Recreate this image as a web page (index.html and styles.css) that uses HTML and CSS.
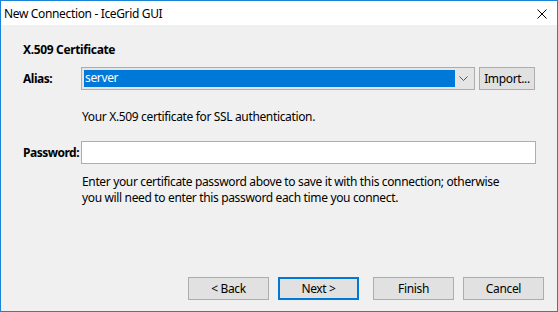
FILE: index.html
```html
<!DOCTYPE html>
<html lang="en">
<head>
  <meta charset="UTF-8">
  <title>New Connection - IceGrid GUI</title>
  <link rel="stylesheet" href="styles.css">
</head>
<body>
  <div class="window">
    <div class="titlebar">
      <span class="title">New Connection - IceGrid GUI</span>
      <span class="close">
        <svg width="10" height="10" viewBox="0 0 10 10"><path d="M0.5 0.5 L9.5 9.5 M9.5 0.5 L0.5 9.5" stroke="#000" stroke-width="1" fill="none"/></svg>
      </span>
    </div>
    <div class="content">
      <h1 class="heading">X.509 Certificate</h1>
      <div class="row alias-row">
        <label class="label">Alias:</label>
        <div class="combo">
          <span class="combo-value">server</span>
          <span class="combo-arrow">
            <svg width="9" height="5" viewBox="0 0 9 5"><path d="M0.5 0.5 L4.5 4.5 L8.5 0.5" stroke="#555" stroke-width="1" fill="none"/></svg>
          </span>
        </div>
        <button class="btn import">Import...</button>
      </div>
      <p class="hint">Your X.509 certificate for SSL authentication.</p>
      <div class="row pass-row">
        <label class="label">Password:</label>
        <div class="input"></div>
      </div>
      <p class="help">Enter your certificate password above to save it with this connection; otherwise<br>you will need to enter this password each time you connect.</p>
      <div class="footer">
        <button class="btn">&lt; Back</button>
        <button class="btn default">Next &gt;</button>
        <button class="btn finish">Finish</button>
        <button class="btn">Cancel</button>
      </div>
    </div>
  </div>
</body>
</html>
```

FILE: styles.css
```css
* { box-sizing: border-box; }
body {
  margin: 0;
  font-family: 'Noto Sans', 'Open Sans', sans-serif;
  font-size: 12px;
  letter-spacing: -0.35px;
  color: #000;
}
.window {
  width: 558px;
  height: 312px;
  border: 1px solid #1883d7;
  display: flex;
  flex-direction: column;
}
.titlebar {
  height: 24px;
  background: #fff;
  display: flex;
  align-items: center;
  justify-content: space-between;
  padding: 0 10px 0 3px;
}
.title {
  font-size: 12px;
}
.close {
  display: flex;
  margin-top: 1px;
}
.content {
  flex: 1;
  background: #f0f0f0;
  padding: 17px 13px 11px 22px;
  display: flex;
  flex-direction: column;
}
.heading {
  margin: 0;
  font-size: 12px;
  font-weight: bold;
  line-height: 16px;
}
.row {
  display: flex;
  align-items: center;
}
.label {
  width: 58px;
  flex-shrink: 0;
  font-weight: bold;
  white-space: nowrap;
  letter-spacing: -0.5px;
}
.alias-row {
  margin-top: 9px;
  height: 23px;
}
.combo {
  width: 394px;
  height: 23px;
  border: 1px solid #adadad;
  background: #e5e5e5;
  display: flex;
  align-items: center;
  padding: 2px;
}
.combo-value {
  flex: 1;
  height: 17px;
  background: #0078d7;
  color: #fff;
  line-height: 16px;
  padding-left: 1px;
}
.combo-arrow {
  width: 17px;
  display: flex;
  justify-content: center;
}
.btn {
  font-family: inherit;
  font-size: 12px;
  letter-spacing: -0.35px;
  color: #000;
  height: 23px;
  width: 81px;
  background: #e1e1e1;
  border: 1px solid #adadad;
  padding: 0;
}
.import {
  width: 56px;
  margin-left: 4px;
}
.hint {
  margin: 19px 0 0 59px;
  line-height: 16px;
}
.pass-row {
  margin-top: 16px;
  height: 23px;
}
.input {
  width: 455px;
  height: 23px;
  background: #fff;
  border: 1px solid #adadad;
}
.help {
  margin: 10px 0 0 59px;
  line-height: 16px;
}
.footer {
  margin-top: auto;
  display: flex;
  justify-content: flex-end;
  gap: 9px;
}
.default {
  border: 2px solid #0078d7;
}
.finish {
  margin-left: 5px;
}
```
